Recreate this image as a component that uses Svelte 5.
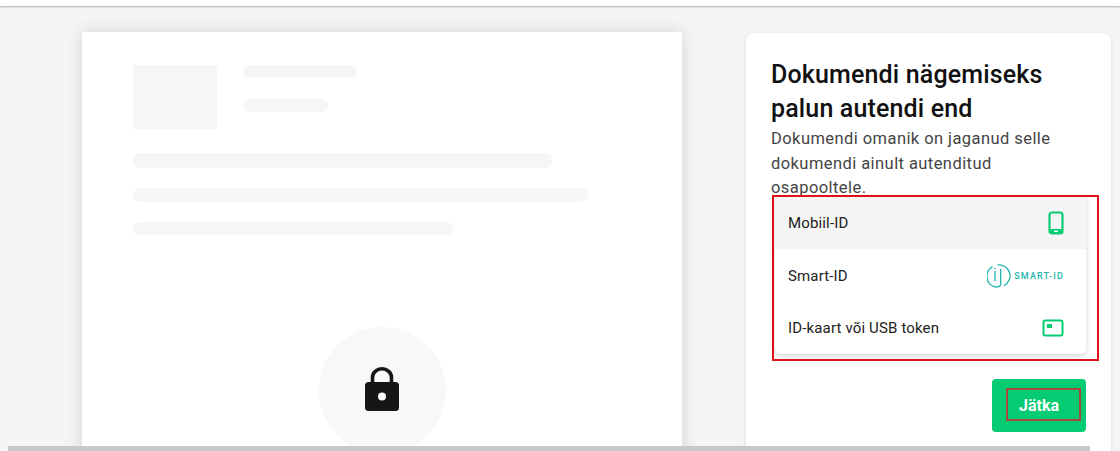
<script lang="ts">
  const methods = [
    { id: "mobile", label: "Mobiil-ID" },
    { id: "smart", label: "Smart-ID" },
    { id: "card", label: "ID-kaart või USB token" },
  ];
  const selected = "mobile";
</script>

<div class="page">
  <div class="topbar"></div>
  <main>
    <section class="preview">
      <div class="head">
        <div class="thumb"></div>
        <div class="head-lines">
          <div class="bar b-title"></div>
          <div class="bar b-sub"></div>
        </div>
      </div>
      <div class="bar b1"></div>
      <div class="bar b2"></div>
      <div class="bar b3"></div>
      <div class="lock">
        <svg width="34" height="44" viewBox="0 0 34 44">
          <path d="M7.5 20v-9.5a9.5 8.7 0 0 1 19 0V20" fill="none" stroke="#161616" stroke-width="3.6" />
          <rect x="0" y="15" width="34" height="29" rx="3.5" fill="#161616" />
          <circle cx="17" cy="29.5" r="4" fill="#f8f8f8" />
        </svg>
      </div>
    </section>

    <aside class="auth">
      <h1>Dokumendi nägemiseks palun autendi end</h1>
      <p>Dokumendi omanik on jaganud selle dokumendi ainult autenditud osapooltele.</p>
      <div class="methods-wrap">
        <ul class="methods">
          {#each methods as m (m.id)}
            <li class={m.id} class:active={m.id === selected}>
              <span>{m.label}</span>
              {#if m.id === "mobile"}
                <svg width="16" height="24" viewBox="0 0 16 24">
                  <rect x="1.5" y="1.5" width="13" height="21" rx="2.5" fill="none" stroke="#05cb72" stroke-width="2.2" />
                  <rect x="1.5" y="18" width="13" height="4.5" rx="1.5" fill="#05cb72" />
                  <rect x="6" y="19.6" width="4" height="1.4" fill="#e8fff3" />
                </svg>
              {:else if m.id === "smart"}
                <div class="smart-logo">
                  <svg width="24" height="24" viewBox="0 0 24 24">
                    <g fill="none" stroke="#1fb5ae" stroke-width="1.3">
                      <path d="M5.5 2.6a11 11 0 0 0 3.4 20.4" />
                      <path d="M10.5 0.9a11 11 0 0 1 6.5 20.7" />
                      <path d="M13.7 5v14.8c0 2-1.6 3.2-4.8 3.3" />
                      <path d="M8 7v10" />
                    </g>
                    <circle cx="8" cy="4.6" r="0.8" fill="#1fb5ae" />
                  </svg>
                  <span class="smart-text">SMART-ID</span>
                </div>
              {:else}
                <svg width="22" height="18" viewBox="0 0 22 18">
                  <rect x="1.5" y="1.5" width="19" height="15" rx="1.5" fill="none" stroke="#05cb72" stroke-width="2" />
                  <rect x="5" y="5" width="5" height="4" fill="#05cb72" />
                </svg>
              {/if}
            </li>
          {/each}
        </ul>
        <!-- annotation box drawn on top of the original screenshot -->
        <div class="mark"></div>
      </div>
      <div class="actions">
        <button type="button">Jätka<span class="btn-mark"></span></button>
      </div>
    </aside>
  </main>
  <div class="scrollbar"></div>
</div>

<style>
  :global(body) {
    margin: 0;
    overflow: hidden;
  }
  .page {
    position: relative;
    width: 1120px;
    height: 451px;
    overflow: hidden;
    background: #f5f5f5;
    font-family: Roboto, "Liberation Sans", sans-serif;
  }
  .topbar {
    height: 6px;
    background: #fff;
    box-shadow: 0 1px 2px rgba(0, 0, 0, 0.3);
  }
  main {
    display: flex;
    align-items: flex-start;
    padding: 26px 0 0 82px;
  }
  .preview {
    box-sizing: border-box;
    width: 600px;
    height: 500px;
    flex: none;
    padding: 33px 51px;
    background: #fff;
    box-shadow: 0 0 16px rgba(0, 0, 0, 0.14);
  }
  .head {
    display: flex;
    gap: 26px;
    margin-bottom: 24px;
  }
  .thumb {
    width: 84px;
    height: 64px;
    border-radius: 2px;
    background: #f6f6f6;
  }
  .bar {
    height: 13px;
    border-radius: 7px;
    background: #f6f6f6;
  }
  .b-title {
    width: 114px;
    margin-bottom: 21px;
  }
  .b-sub {
    width: 85px;
  }
  .b1 {
    width: 419px;
    height: 15px;
    margin-bottom: 20px;
  }
  .b2 {
    width: 455px;
    height: 14px;
    margin-bottom: 20px;
  }
  .b3 {
    width: 320px;
    margin-bottom: 92px;
  }
  .lock {
    display: flex;
    align-items: center;
    justify-content: center;
    width: 127px;
    height: 127px;
    margin-left: 186px;
    border-radius: 50%;
    background: #f8f8f8;
  }
  .lock svg {
    margin: 0 2px 3px 0;
  }
  .auth {
    box-sizing: border-box;
    width: 365px;
    height: 500px;
    flex: none;
    margin: 1px 0 0 64px;
    padding: 25px;
    background: #fff;
    border-radius: 8px;
    box-shadow: 0 1px 4px rgba(0, 0, 0, 0.12);
  }
  h1 {
    margin: 0;
    font-size: 25px;
    font-weight: 500;
    line-height: 34px;
    letter-spacing: 0.15px;
    color: #111;
  }
  p {
    max-width: 300px;
    margin: 1px 0 0;
    font-size: 16.5px;
    line-height: 24.5px;
    letter-spacing: 0.43px;
    color: #444;
  }
  .methods-wrap {
    position: relative;
    width: 311px;
    margin: -4px 0 0 4px;
  }
  .methods {
    list-style: none;
    margin: 0;
    padding: 0;
    border-radius: 0 0 6px 6px;
    background: #fff;
    box-shadow: 0 2px 6px rgba(0, 0, 0, 0.18);
  }
  li {
    box-sizing: border-box;
    display: flex;
    align-items: center;
    justify-content: space-between;
    padding: 0 22px 0 13px;
    font-size: 15px;
    color: #222;
    letter-spacing: 0.15px;
  }
  li.mobile {
    height: 52px;
  }
  li.smart {
    height: 54px;
  }
  li.card {
    height: 51px;
  }
  li.active {
    background: #f5f5f5;
  }
  .smart-logo {
    display: flex;
    align-items: center;
    gap: 3px;
  }
  .smart-text {
    font-size: 9px;
    font-weight: 500;
    letter-spacing: 1.15px;
    color: #1fb5ae;
  }
  .mark {
    position: absolute;
    top: -2px;
    left: -3px;
    right: -13px;
    bottom: -7px;
    border: 2px solid #e0101c;
    pointer-events: none;
  }
  .actions {
    display: flex;
    justify-content: flex-end;
    margin-top: 25px;
  }
  button {
    position: relative;
    width: 94px;
    height: 53px;
    padding: 0;
    border: 0;
    border-radius: 4px;
    background: #05cb72;
    color: #fff;
    font: 700 16px Roboto, sans-serif;
  }
  .btn-mark {
    position: absolute;
    top: 9px;
    left: 14px;
    right: 5px;
    bottom: 11px;
    border: 2px solid #a8483c;
  }
  .scrollbar {
    position: absolute;
    left: 8px;
    right: 30px;
    bottom: 0;
    height: 5px;
    background: #c8c8c8;
  }
</style>
